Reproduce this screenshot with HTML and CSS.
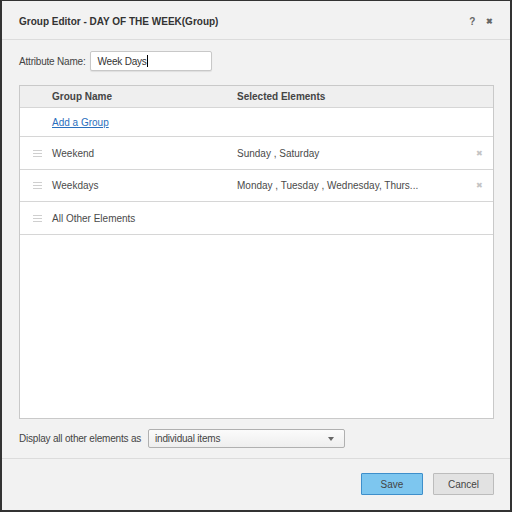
FILE: index.html
```html
<!DOCTYPE html>
<html>
<head>
<meta charset="utf-8">
<link rel="stylesheet" href="styles.css">
</head>
<body>
<div class="dialog">
  <div class="header">
    <div class="title">Group Editor - DAY OF THE WEEK(Group)</div>
    <div class="tools"><span class="help">?</span><span class="close">&#x2716;</span></div>
  </div>
  <div class="content">
    <div class="attr">
      <label>Attribute Name:</label>
      <div class="input">Week Days<span class="caret"></span></div>
    </div>
    <div class="table">
      <div class="row head">
        <div class="c-handle"></div>
        <div class="c-name">Group Name</div>
        <div class="c-sel">Selected Elements</div>
        <div class="c-x"></div>
      </div>
      <div class="row add">
        <div class="c-handle"></div>
        <div class="c-name"><a class="link">Add a Group</a></div>
        <div class="c-sel"></div>
        <div class="c-x"></div>
      </div>
      <div class="row item">
        <div class="c-handle"><span class="grip"></span></div>
        <div class="c-name">Weekend</div>
        <div class="c-sel">Sunday , Saturday</div>
        <div class="c-x">&#x2716;</div>
      </div>
      <div class="row item mid">
        <div class="c-handle"><span class="grip"></span></div>
        <div class="c-name">Weekdays</div>
        <div class="c-sel">Monday , Tuesday , Wednesday, Thurs...</div>
        <div class="c-x">&#x2716;</div>
      </div>
      <div class="row item">
        <div class="c-handle"><span class="grip"></span></div>
        <div class="c-name">All Other Elements</div>
        <div class="c-sel"></div>
        <div class="c-x"></div>
      </div>
    </div>
    <div class="display">
      <label>Display all other elements as</label>
      <div class="select"><span>individual items</span><span class="arrow"></span></div>
    </div>
  </div>
  <div class="footer">
    <button class="btn save">Save</button>
    <button class="btn cancel">Cancel</button>
  </div>
</div>
</body>
</html>
```

FILE: styles.css
```css
* { box-sizing: border-box; }
html, body { margin: 0; padding: 0; }
body {
  width: 512px;
  height: 512px;
  background: #2e2e2e;
  font-family: "Liberation Sans", Arial, sans-serif;
  font-size: 10px;
  letter-spacing: -0.2px;
  color: #333;
}
.dialog {
  width: 512px;
  height: 512px;
  background: #f2f2f2;
  border: 2px solid #333;
  border-top-width: 1px;
  border-radius: 2px;
  display: flex;
  flex-direction: column;
}
.header {
  height: 39px;
  flex: none;
  border-bottom: 1px solid #dcdcdc;
  display: flex;
  align-items: center;
  padding: 0 17px 0 17px;
}
.title {
  flex: 1;
  font-weight: bold;
  font-size: 10px;
  letter-spacing: 0;
  color: #333;
  padding-top: 3px;
}
.tools {
  display: flex;
  gap: 11px;
  color: #666;
  font-weight: bold;
  align-items: center;
  padding-top: 2px;
}
.help { font-size: 10px; }
.close { font-size: 8px; color: #666; }
.content {
  flex: 1;
  display: flex;
  flex-direction: column;
  padding: 11px 16px 10px 17px;
}
.attr {
  display: flex;
  align-items: center;
  gap: 5px;
  height: 20px;
}
.attr label { color: #444; }
.input {
  width: 122px;
  height: 20px;
  background: #fff;
  border: 1px solid #c8c8c8;
  border-radius: 2px;
  box-shadow: 0 1px 1px rgba(0,0,0,0.08);
  padding: 3px 6px;
  color: #333;
  line-height: 13px;
  display: flex;
  align-items: center;
}
.caret {
  display: inline-block;
  width: 1px;
  height: 12px;
  background: #000;
}
.table {
  margin-top: 14px;
  height: 334px;
  flex: none;
  background: #fff;
  border: 1px solid #c9c9c9;
  display: flex;
  flex-direction: column;
  letter-spacing: 0;
}
.row {
  display: flex;
  align-items: center;
  border-bottom: 1px solid #d6d6d6;
  color: #4a4a4a;
}
.row.head {
  height: 22px;
  background: #efefef;
  font-weight: bold;
  color: #444;
}
.row.add { height: 29px; }
.row.item { height: 33px; }
.row.item.mid { height: 32px; }
.c-handle {
  width: 32px;
  display: flex;
  justify-content: center;
  padding-left: 2px;
}
.c-name { width: 185px; }
.c-sel { flex: 1; }
.c-x {
  width: 28px;
  text-align: center;
  color: #c4c4c4;
  font-size: 8px;
}
.grip {
  display: block;
  width: 9px;
  height: 7px;
  border-top: 1px solid #cfcfcf;
  border-bottom: 1px solid #cfcfcf;
  position: relative;
}
.grip::after {
  content: "";
  position: absolute;
  left: 0;
  right: 0;
  top: 2px;
  border-top: 1px solid #cfcfcf;
}
.link {
  color: #2a6fbd;
  text-decoration: underline;
  cursor: pointer;
}
.display {
  margin-top: 10px;
  display: flex;
  align-items: center;
  gap: 7px;
  height: 19px;
}
.display label { color: #444; }
.select {
  width: 197px;
  height: 19px;
  border: 1px solid #b0b0b0;
  border-radius: 2px;
  background: linear-gradient(#fbfbfb, #eeeeee);
  display: flex;
  align-items: center;
  justify-content: space-between;
  padding: 0 10px 0 6px;
  color: #444;
}
.arrow {
  width: 0;
  height: 0;
  border-left: 3.5px solid transparent;
  border-right: 3.5px solid transparent;
  border-top: 4px solid #666;
}
.footer {
  flex: none;
  height: 52px;
  border-top: 1px solid #dcdcdc;
  display: flex;
  justify-content: flex-end;
  align-items: flex-start;
  gap: 10px;
  padding: 14px 16px 0 0;
}
.btn {
  font-family: "Liberation Sans", Arial, sans-serif;
  font-size: 10px;
  height: 22px;
  border-radius: 1px;
  padding: 0;
  color: #444;
}
.save {
  width: 62px;
  background: #7dc6ef;
  border: 1px solid #3e8fcb;
}
.cancel {
  width: 61px;
  background: #e2e2e2;
  border: 1px solid #bcbcbc;
}
```
